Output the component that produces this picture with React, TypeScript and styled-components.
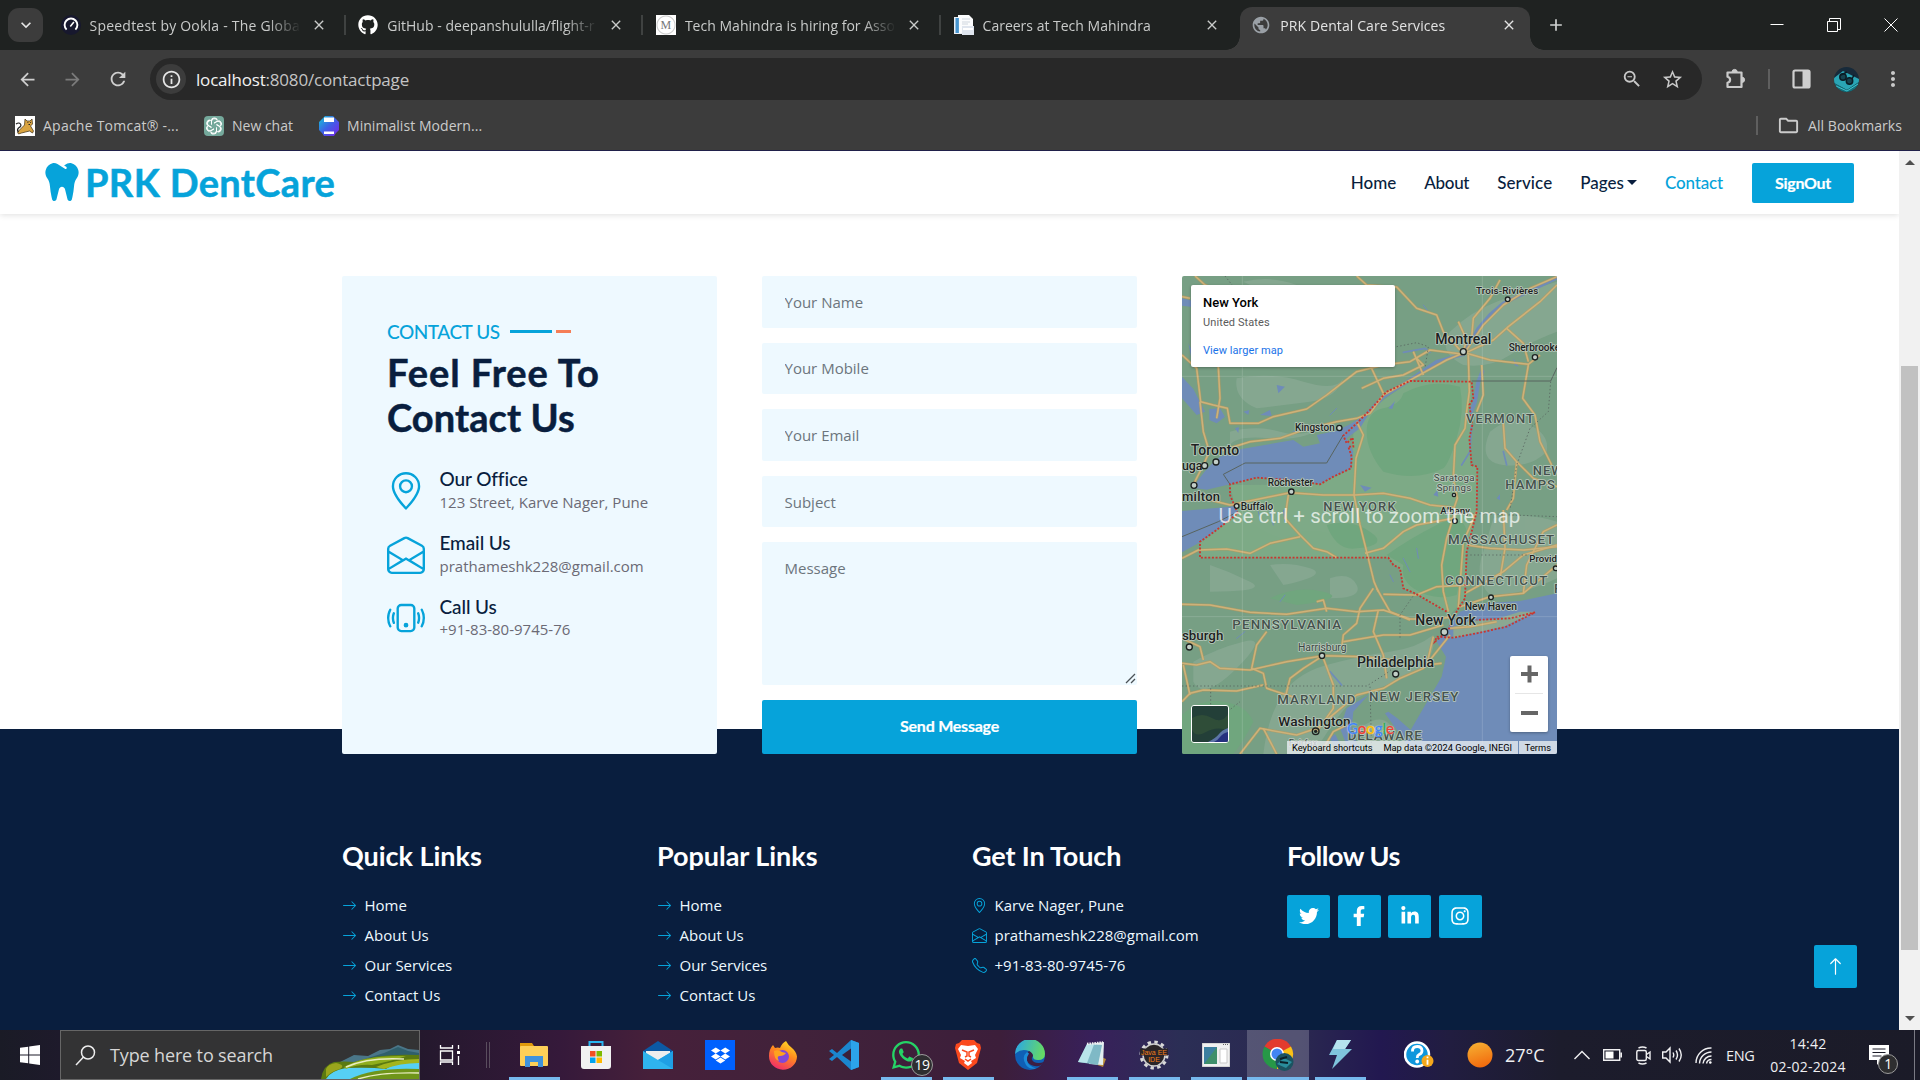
import React from "react";
import styled, { createGlobalStyle, css } from "styled-components";
import {
  BsArrowRight,
  BsArrowUp,
  BsEnvelopeOpen,
  BsGeoAlt,
  BsPhoneVibrate,
  BsTelephone,
} from "react-icons/bs";
import {
  FaDropbox,
  FaFacebookF,
  FaGithub,
  FaInstagram,
  FaLinkedinIn,
  FaTooth,
  FaTwitter,
  FaWhatsapp,
} from "react-icons/fa";
import {
  MdArrowBack,
  MdArrowForward,
  MdClose,
  MdOutlineFolder,
  MdOutlineInfo,
  MdPublic,
  MdRefresh,
  MdStarBorder,
  MdZoomOut,
  MdMoreVert,
  MdKeyboardArrowDown,
  MdAdd,
} from "react-icons/md";

const display = `Lato, "Open Sans", sans-serif`;
const body = `"Open Sans", "Noto Sans", sans-serif`;
const primary = "#06a3da";
const dark = "#091e3e";
const light = "#eef9ff";

const GlobalStyle = createGlobalStyle`
  * { box-sizing: border-box; }
  html, body { margin: 0; padding: 0; }
  body { font-family: ${body}; overflow: hidden; background: #fff; }
  svg { display: block; flex: none; }
`;

const Screen = styled.div`
  width: 1920px;
  height: 1080px;
  display: flex;
  flex-direction: column;
  overflow: hidden;
`;

/* ---------- browser chrome ---------- */

const TabStrip = styled.div`
  height: 50px;
  background: #1f2221;
  display: flex;
  color: #c9cbca;
`;

const TabSearch = styled.div`
  width: 35px;
  height: 34px;
  margin: 8px 3px 0 8px;
  border-radius: 11px;
  background: #3c3c3c;
  display: grid;
  place-items: center;
  color: #e6e6e6;
`;

const Tab = styled.div<{ $active?: boolean; $line?: boolean }>`
  position: relative;
  width: 290px;
  margin: 7px 4.2px 0 3.5px;
  height: 43px;
  padding: 0 9px 7px 11px;
  display: flex;
  align-items: center;
  gap: 9px;
  font-size: 14px;
  border-radius: 12px 12px 0 0;
  ${(p) =>
    p.$line &&
    css`
      &::after {
        content: "";
        position: absolute;
        right: -6px;
        top: 8px;
        width: 2px;
        height: 20px;
        background: #3f4241;
      }
    `}
  ${(p) =>
    p.$active &&
    css`
      background: #3c3c3c;
      color: #e3e3e3;
      &::before,
      &::after {
        content: "";
        position: absolute;
        bottom: 0;
        width: 14px;
        height: 14px;
      }
      &::before {
        left: -14px;
        background: radial-gradient(circle at 0 0, transparent 13.5px, #3c3c3c 14px);
      }
      &::after {
        right: -14px;
        background: radial-gradient(circle at 100% 0, transparent 13.5px, #3c3c3c 14px);
      }
    `}
`;

const TabTitle = styled.span<{ $spread?: number }>`
  width: 211px;
  padding-top: 1px;
  overflow: hidden;
  white-space: nowrap;
  line-height: 20px;
  letter-spacing: ${(p) => p.$spread ?? 0.05}px;
  mask-image: linear-gradient(90deg, #000 178px, transparent 211px);
`;

const TabClose = styled.span`
  width: 18px;
  display: grid;
  place-items: center;
`;

const MediumMark = styled.span`
  width: 20px;
  height: 20px;
  flex: none;
  background: radial-gradient(circle, #fff 8px, #c9c9c9 9px, #fff 10px);
  color: #777;
  font: 12px/20px "Liberation Serif", serif;
  text-align: center;
`;

const NewTab = styled.div`
  width: 40px;
  height: 50px;
  margin-left: 2px;
  display: grid;
  place-items: center;
  color: #d0d2d1;
`;

const WindowButtons = styled.div`
  margin-left: auto;
  padding-right: 1px;
  display: flex;
  height: 50px;
  color: #fff;
`;

const WindowButton = styled.div`
  width: 57px;
  display: grid;
  place-items: center;
`;

const Toolbar = styled.div`
  height: 58px;
  background: #3c3c3c;
  display: flex;
  align-items: center;
  padding: 0 15px 0 17px;
  color: #c9c9c9;
`;

const NavIcon = styled.span<{ $dim?: boolean; $gap?: number }>`
  width: 22px;
  margin-right: ${(p) => p.$gap ?? 22}px;
  color: ${(p) => (p.$dim ? "#7b7b7b" : "#cfcfcf")};
`;

const Omnibox = styled.div`
  width: 1552px;
  height: 42px;
  border-radius: 21px;
  background: #282828;
  display: flex;
  align-items: center;
  padding: 0 18px 0 6px;
  font-size: 17px;
  letter-spacing: -0.19px;
`;

const InfoBadge = styled.span`
  width: 30px;
  height: 30px;
  border-radius: 50%;
  background: #3c3c3c;
  display: grid;
  place-items: center;
  color: #e6e6e6;
  margin-right: 10px;
`;

const Url = styled.span`
  flex: 1;
  color: #c4c4c4;
  b {
    font-weight: 400;
    color: #f2f2f2;
  }
`;

const OmniIcon = styled.span`
  margin-left: 18px;
`;

const ToolActions = styled.div`
  margin-left: auto;
  display: flex;
  align-items: center;
`;

const Divider = styled.span<{ $h: number; $m: string }>`
  width: 2px;
  height: ${(p) => p.$h}px;
  margin: ${(p) => p.$m};
  background: #5f5f5f;
`;

const Bookmarks = styled.div`
  height: 43px;
  background: #3c3c3c;
  border-bottom: 1px solid #20204a;
  display: flex;
  align-items: center;
  padding: 0 18px 7px 15px;
  color: #cbcbcb;
  font-size: 14px;
`;

const Bookmark = styled.span<{ $w?: number; $spread?: number }>`
  display: flex;
  align-items: center;
  gap: 8px;
  width: ${(p) => (p.$w ? `${p.$w}px` : "auto")};
  white-space: nowrap;
  letter-spacing: ${(p) => p.$spread ?? 0}px;
`;

const Spacer = styled.span`
  flex: 1;
`;

/* ---------- page ---------- */

const Viewport = styled.div`
  height: 879px;
  display: flex;
`;

const Page = styled.main`
  position: relative;
  width: 1899px;
  height: 879px;
  overflow: hidden;
  background: #fff;
  display: flex;
  flex-direction: column;
`;

const Navbar = styled.nav`
  height: 63px;
  flex: none;
  background: #fff;
  box-shadow: 0 1px 6px rgba(0, 0, 0, 0.13);
  display: flex;
  align-items: center;
  padding: 1px 45px 0 43px;
`;

const Brand = styled.div`
  display: flex;
  align-items: center;
  gap: 4px;
  padding-bottom: 3px;
  color: ${primary};
  font: 700 38px/46px ${display};
  letter-spacing: 0.35px;
  -webkit-text-stroke: 0.5px;
`;

const NavLinks = styled.div`
  margin-left: auto;
  display: flex;
  align-items: center;
  gap: 28px;
  padding-bottom: 1px;
`;

const NavLink = styled.a<{ $active?: boolean; $spread?: number }>`
  display: flex;
  align-items: center;
  gap: 3px;
  color: ${(p) => (p.$active ? primary : dark)};
  font: 500 17px/24px ${display};
  letter-spacing: ${(p) => p.$spread ?? 0}px;
`;

const Caret = styled.span`
  border: 5px solid transparent;
  border-top-color: ${dark};
  border-bottom: 0;
  margin-bottom: 1px;
`;

const SignOut = styled.button`
  width: 102px;
  height: 40px;
  margin-left: 29px;
  padding: 0;
  border: 0;
  border-radius: 2px;
  background: ${primary};
  color: #fff;
  font: 700 16px/24px ${display};
  letter-spacing: -0.28px;
  -webkit-text-stroke: 0.2px;
`;

const ContactGrid = styled.section`
  position: relative;
  z-index: 1;
  flex: none;
  height: 478px;
  margin: 62px 0 0 342px;
  display: grid;
  grid-template-columns: repeat(3, 375px);
  gap: 45px;
`;

const ContactCard = styled.div`
  background: ${light};
  border-radius: 2px;
  padding: 45px;
`;

const Eyebrow = styled.h5`
  margin: 0 0 8px;
  display: flex;
  align-items: center;
  color: ${primary};
  font: 500 19px/21px ${display};
  letter-spacing: -0.46px;
`;

const Rule = styled.span<{ $w: number; $c: string; $gap: number }>`
  width: ${(p) => p.$w}px;
  height: 3px;
  margin-left: ${(p) => p.$gap}px;
  background: ${(p) => p.$c};
`;

const CardTitle = styled.h1`
  margin: 0 0 28px;
  color: ${dark};
  font: 700 38px/45px ${display};
  letter-spacing: 0.95px;
  -webkit-text-stroke: 0.5px;
`;

const TightLine = styled.span`
  letter-spacing: 0.08px;
`;

const ContactItem = styled.div`
  display: flex;
  align-items: center;
  gap: 14.5px;
  margin-bottom: 17.6px;
  color: ${primary};
`;

const ItemTitle = styled.h5`
  margin: -0.6px 0 0.6px;
  color: ${dark};
  font: 500 19px/23px ${display};
  letter-spacing: -0.1px;
`;

const ItemText = styled.div`
  color: #6b6a75;
  font-size: 15px;
  line-height: 23px;
`;

const Form = styled.form`
  display: flex;
  flex-direction: column;
  gap: 15px;
`;

const field = css`
  display: block;
  width: 375px;
  border: 0;
  border-radius: 2px;
  outline: 0;
  background: ${light};
  color: #6b6a75;
  font: 400 15px/22.5px ${body};
  &::placeholder {
    color: #6c757d;
    opacity: 1;
  }
`;

const Input = styled.input`
  ${field}
  height: 51.6px;
  padding: 6px 22.5px;
`;

const MessageField = styled.div`
  position: relative;
  height: 142.6px;
`;

const TextArea = styled.textarea`
  ${field}
  height: 142.6px;
  padding: 15px 22.5px;
  resize: none;
`;

const Grabber = styled.svg`
  position: absolute;
  right: 1px;
  bottom: 1px;
`;

const Submit = styled.button`
  height: 54px;
  padding: 0 0 1px;
  border: 0;
  border-radius: 2px;
  background: ${primary};
  color: #fff;
  font: 700 16px/24px ${display};
  letter-spacing: -0.23px;
  -webkit-text-stroke: 0.2px;
`;

/* ---------- map ---------- */

const MapFrame = styled.div`
  position: relative;
  width: 375px;
  height: 478px;
  overflow: hidden;
  border-radius: 2px;
  font-family: Roboto, sans-serif;
`;

const MapInfo = styled.div`
  position: absolute;
  left: 9px;
  top: 9px;
  width: 204px;
  height: 82px;
  padding: 8px 12px;
  border-radius: 2px;
  background: #fff;
  box-shadow: 0 1px 3px rgba(0, 0, 0, 0.3);
`;

const MapPlace = styled.div`
  color: #000;
  font-size: 13px;
  font-weight: 500;
  line-height: 19px;
`;

const MapRegion = styled.div`
  margin-top: 1px;
  color: #5b5b5b;
  font-size: 11px;
  line-height: 20px;
  letter-spacing: 0.1px;
`;

const MapLink = styled.a`
  display: block;
  margin-top: 8px;
  color: #1a73e8;
  font-size: 11px;
  line-height: 20px;
  letter-spacing: 0.06px;
`;

const ScrollHint = styled.div`
  position: absolute;
  left: 0;
  right: 0;
  top: 227px;
  text-align: center;
  color: rgba(255, 255, 255, 0.72);
  font-size: 20.5px;
  line-height: 26px;
  letter-spacing: 0.05px;
`;

const ZoomControl = styled.div`
  position: absolute;
  right: 9px;
  bottom: 22px;
  width: 38px;
  height: 76px;
  border-radius: 2px;
  background: #fff;
  box-shadow: 0 1px 3px rgba(0, 0, 0, 0.3);
`;

const Satellite = styled.div`
  position: absolute;
  left: 9px;
  bottom: 11px;
  width: 38px;
  height: 38px;
  border: 1.5px solid #fff;
  border-radius: 3px;
  overflow: hidden;
`;

const GoogleMark = styled.div`
  position: absolute;
  left: 165px;
  bottom: 16px;
  display: flex;
  font: 500 15px/20px Lato, sans-serif;
  letter-spacing: -0.1px;
  -webkit-text-stroke: 0.3px;
  text-shadow: 0 0 1.5px #fff;
`;

const Letter = styled.span<{ $c: string }>`
  color: ${(p) => p.$c};
`;

const Attribution = styled.div`
  position: absolute;
  right: 0;
  bottom: 0;
  width: 270px;
  height: 13px;
  display: flex;
  justify-content: space-between;
  padding: 0 6px 0 5px;
  background: rgba(235, 238, 242, 0.78);
  color: #000;
  font-size: 9.3px;
  line-height: 13px;
  white-space: nowrap;
`;

const MapData = styled.span`
  padding-left: 5px;
`;

const Terms = styled.span`
  padding-left: 6px;
  border-left: 1px solid #6e8cb9;
`;

/* ---------- footer ---------- */

const Footer = styled.footer`
  flex: 1;
  margin-top: -25px;
  padding: 110.5px 0 0 342px;
  background: ${dark};
  display: grid;
  grid-template-columns: repeat(4, 315px);
  align-content: start;
`;

const FooterTitle = styled.h3<{ $spread?: number }>`
  margin: 0 0 18.8px;
  color: #fff;
  font: 700 27px/32px ${display};
  letter-spacing: ${(p) => p.$spread ?? -0.04}px;
`;

const FooterRow = styled.div`
  display: flex;
  align-items: center;
  gap: 7.5px;
  height: 30px;
  color: ${light};
  font-size: 15px;
  svg {
    color: ${primary};
  }
`;

const Socials = styled.div`
  display: flex;
  gap: 7.6px;
  padding-top: 4.7px;
`;

const Square = styled.a`
  width: 43px;
  height: 43px;
  border-radius: 2px;
  background: ${primary};
  color: #fff;
  display: grid;
  place-items: center;
`;

const BackToTop = styled(Square)`
  position: absolute;
  right: 42px;
  bottom: 42px;
`;

const Scrollbar = styled.div`
  width: 21px;
  background: #f1f1f1;
  display: flex;
  flex-direction: column;
  align-items: center;
  padding: 9px 0;
`;

const ScrollArrow = styled.span<{ $down?: boolean }>`
  border: 5px solid transparent;
  ${(p) =>
    p.$down
      ? css`
          border-top-color: #505050;
          border-bottom: 0;
        `
      : css`
          border-bottom-color: #505050;
          border-top: 0;
        `}
`;

const Thumb = styled.span`
  width: 17px;
  height: 584px;
  margin: 201px 0 auto;
  background: #c1c1c1;
`;

/* ---------- taskbar ---------- */

const Taskbar = styled.div`
  height: 50px;
  display: flex;
  color: #f0f0f2;
  background: linear-gradient(
    90deg,
    #1a1b26 0,
    #1e1a2b 60px,
    #24182d 420px,
    #35193a 560px,
    #46203a 650px,
    #41223a 800px,
    #3c1e3a 1000px,
    #38205a 1092px,
    #2b2e55 1180px,
    #2a2850 1300px,
    #221850 1380px,
    #211d40 1450px,
    #1c1c2c 1560px,
    #1b1b28 1920px
  );
`;

const StartCell = styled.div`
  width: 60px;
  display: grid;
  place-items: center;
`;

const SearchBox = styled.div`
  width: 360px;
  height: 50px;
  border: 1px solid #666;
  background: #333334;
  display: flex;
  align-items: center;
  padding-left: 14px;
  color: #d6d6d6;
  font-size: 18px;
  letter-spacing: -0.14px;
`;

const SearchText = styled.span`
  margin-left: 14px;
  flex: 1;
`;

const TaskView = styled.div`
  width: 83px;
  display: flex;
  align-items: center;
  justify-content: space-between;
  padding: 0 13px 0 19px;
`;

const Grip = styled.span`
  width: 4px;
  height: 26px;
  border: 1px solid #5a4e5e;
  border-width: 0 1px;
`;

const AppCell = styled.div<{ $running?: boolean; $active?: boolean }>`
  position: relative;
  width: 62px;
  display: grid;
  place-items: center;
  background: ${(p) => (p.$active ? "rgba(255,255,255,.2)" : "transparent")};
  ${(p) =>
    (p.$running || p.$active) &&
    css`
      &::after {
        content: "";
        position: absolute;
        left: ${p.$active ? 0 : 6}px;
        right: ${p.$active ? 0 : 5}px;
        bottom: 0;
        height: 3px;
        background: #76b9ed;
      }
    `}
`;

const CountBadge = styled.span<{ $x: number; $y: number; $s: number }>`
  position: absolute;
  left: ${(p) => p.$x}px;
  top: ${(p) => p.$y}px;
  width: ${(p) => p.$s}px;
  height: ${(p) => p.$s}px;
  border: 1px solid #9b9b9b;
  border-radius: 50%;
  background: #2e2e30;
  color: #fff;
  font-size: 14px;
  line-height: ${(p) => p.$s - 2}px;
  text-align: center;
  letter-spacing: -0.5px;
`;

const Tray = styled.div`
  width: 549px;
  display: flex;
  align-items: center;
`;

const TrayItem = styled.span<{ $gap: number }>`
  position: relative;
  margin-left: ${(p) => p.$gap}px;
`;

const Temperature = styled(TrayItem)`
  font-size: 18px;
  width: 40px;
`;

const Language = styled(TrayItem)`
  font-size: 14.5px;
  letter-spacing: -0.3px;
  width: 28px;
`;

const Clock = styled(TrayItem)`
  width: 78px;
  font-size: 14px;
  line-height: 23px;
  text-align: center;
  letter-spacing: 0.25px;
  padding-bottom: 1px;
`;

const DesktopEdge = styled.span`
  height: 50px;
  margin-left: auto;
  margin-right: 5px;
  border-left: 1px solid #7a7a84;
`;

/* ---------- drawings ---------- */

const SpeedtestIcon = () => (
  <svg width="20" height="20" viewBox="0 0 20 20">
    <circle cx="10" cy="10" r="10" fill="#17182e" />
    <path d="M5.6 14.6a6.4 6.4 0 1 1 8.8 0" fill="none" stroke="#fff" strokeWidth="1.9" />
    <path d="M9.3 11.4l3.6-4.4" stroke="#fff" strokeWidth="1.6" />
  </svg>
);

const DocIcon = () => (
  <svg width="20" height="20" viewBox="0 0 20 20">
    <path d="M0 2h14v17H0z" fill="#e9eef4" />
    <path d="M4 0h11l4 4v14H4z" fill="#fbfcfd" />
    <path d="M1.5 3h3.4v15H1.5z" fill="#4795cf" />
    <path d="M8 4h8M8 7h8M8 9h6" stroke="#cfd6de" />
    <path d="M8 11h12v9H8z" fill="#dfe5ee" />
    <path d="M9 14h10" stroke="#fff" strokeWidth="2" />
  </svg>
);

const TomcatIcon = () => (
  <svg width="20" height="20" viewBox="0 0 20 20">
    <path d="M0 0h20v20H0z" fill="#fff" />
    <path d="M10 3l2 2h3l2-2 .5 5-2 2 3 5-1 2-3-2-4 1-4 1-3 1-1-2 3-3 4-4z" fill="#d9a441" stroke="#3a2b12" strokeWidth=".7" />
    <path d="M1 8q3-2 4.500 0t-2 4q-2 2 0 4" fill="none" stroke="#222" strokeWidth="1.200" />
    <path d="M12.500 6.500h.8M15 6.500h.8M13.500 8.500h1.500" stroke="#222" />
  </svg>
);

const ChatIcon = () => (
  <svg width="20" height="20" viewBox="0 0 20 20">
    <rect width="20" height="20" rx="4" fill="#75a99c" />
    <g fill="none" stroke="#fff" strokeWidth="1">
      {[0, 60, 120, 180, 240, 300].map((a) => (
        <path key={a} transform={`rotate(${a} 10 10)`} d="M7.500 8.500V5.500a2.900 2.900 0 0 1 5.500-1.200M10 7.100l3.500-2a2.900 2.900 0 0 1 3 4.900" />
      ))}
    </g>
  </svg>
);

const MinimalIcon = () => (
  <svg width="20" height="20" viewBox="0 0 20 20">
    <defs>
      <linearGradient id="mini" x1="0" y1="0" x2="1" y2="1">
        <stop offset="0" stopColor="#12c5d8" />
        <stop offset=".5" stopColor="#3f5fe6" />
        <stop offset="1" stopColor="#7a22e8" />
      </linearGradient>
    </defs>
    <path d="M6 0h8l3 3 3 3v8l-3 3-2 3H5l-2-3-3-3V6l3-3z" fill="url(#mini)" />
    <path d="M5 1.500h10v4.500H5zM5 15.500h10V18H5z" fill="#fff" />
  </svg>
);

const PuzzleIcon = () => (
  <svg width="22" height="22" viewBox="0 0 22 22">
    <path
      d="M2.500 4.500h14v14.500h-14v-4.200q2.600-.6 2.600-3t-2.600-3z"
      fill="none"
      stroke="#cbcbcb"
      strokeWidth="2.200"
      strokeLinejoin="round"
    />
    <path d="M7 4a2.600 2.600 0 0 1 5.200 0zM17 9.200a2.600 2.600 0 0 1 0 5.200z" fill="#cbcbcb" stroke="#cbcbcb" />
  </svg>
);

const AvatarIcon = () => (
  <svg width="25" height="25" viewBox="0 0 25 25">
    <defs>
      <clipPath id="avatar">
        <circle cx="12.500" cy="12.500" r="12.500" />
      </clipPath>
    </defs>
    <g clipPath="url(#avatar)">
      <path d="M0 0h25v25H0z" fill="#172a3a" />
      <path d="M0 11L9 4l16 8v3l-12 8L0 16z" fill="#2aa5b5" />
      <path d="M0 16l13 7 12-8v10H0z" fill="#14707b" />
      <path d="M2 19l11 5 11-7" fill="none" stroke="#3fc3cf" />
      <circle cx="9" cy="10" r="3.200" fill="#164450" stroke="#0b1d26" strokeWidth="1.500" />
      <circle cx="15.500" cy="14" r="3.200" fill="#164450" stroke="#0b1d26" strokeWidth="1.500" />
      <path d="M7 8l6-3M18 12l2-4" stroke="#0b1d26" strokeWidth="1.500" />
    </g>
  </svg>
);

const SidePanelIcon = () => (
  <svg width="20" height="20" viewBox="0 0 20 20">
    <rect x="1.500" y="1.500" width="16" height="17" rx="1.500" fill="none" stroke="#cfcfcf" strokeWidth="2.200" />
    <path d="M10.500 1.500h7v17h-7z" fill="#cfcfcf" />
  </svg>
);

const roads = [
  "M36 270L80 310 92 410 130 420 172 430 180 475 265 475 310 455 410 432 470 390 560 320 640 300 720 290 780 255 880 268",
  "M75 33L105 60 130 70M36 95L60 100M560 33L590 60 680 66 740 130 800 150 820 200 870 255",
  "M90 410L100 500 118 560 100 600 72 655",
  "M118 550L160 555 240 530 330 520 400 495 500 470 560 460 600 445 640 390 730 340 830 285 885 262",
  "M575 370L640 340 700 330 760 300 740 280M600 300L640 385M730 260L760 330",
  "M885 262L940 180 1000 120 1080 70 1161 35M890 262L970 225 1015 185 1110 110 1161 60",
  "M990 45L960 100 910 160 905 220M865 170L890 225 880 260M1010 190L1060 235 1075 290",
  "M890 265L960 285 1075 298 1110 270M895 270L898 380 890 440 885 490 855 540 850 640 862 700 850 735",
  "M1075 300L1058 400 1095 450 1110 530 1145 600M935 300L940 390 920 440M1000 475L1005 550 1040 590 1030 700 1010 735M1040 590L1090 640 1161 665",
  "M100 700L180 720 300 695 360 683 460 690 555 690 640 685 720 700 780 720 855 728",
  "M560 470L580 510 558 580 552 690 570 780 590 860 612 950 625 980",
  "M355 690L345 760 390 810 430 850 470 860 500 878M36 880L85 855 170 852 240 865 300 835 390 815",
  "M585 865L640 850 700 800 740 780 850 760M140 460L150 400 145 306",
  "M855 740L830 820 815 900 820 980 835 1040M920 740L880 830 870 960 865 1030",
  "M36 1018L120 1020 240 1042 350 1048 470 1030 560 1040 640 1035 720 1062 800 1062 850 1055",
  "M440 1010L460 1005 470 1040M610 970L570 1030 560 1075 520 1110 515 1150",
  "M620 970L660 1040 720 1065M640 988L740 990 800 965 900 960M625 1035L610 1100 640 1170 650 1240",
  "M36 1195L80 1200 120 1190 150 1210 240 1215 350 1190 460 1172 580 1175 670 1185",
  "M290 1100L260 1140 245 1210 280 1225 290 1270 380 1300",
  "M36 1120L90 1145 100 1185M36 1310L60 1285 100 1275 200 1278 280 1260",
  "M455 1175L400 1210 360 1240 345 1300M460 1180L490 1260 490 1330 440 1400",
  "M840 1110L760 1210 690 1240 640 1270 560 1290 500 1340 440 1390 380 1410 270 1390 210 1467",
  "M520 1130L640 1110 720 1110 820 1080M790 1115L770 1200 815 1195",
  "M840 1090L900 1085 980 1070M870 1025L960 995 1060 985 1161 900M885 985L930 960 1000 920 1060 870 1161 840",
  "M890 840L960 850 1060 855 1161 845M1000 735L1005 850 990 940M1060 985L1070 900 1120 800 1161 780",
  "M280 1390L320 1467M530 1380L490 1400 450 1467M60 1290L40 1200",
];

/* lighter, less wooded land */
const patches = [
  "M220 50Q300 30 380 60T560 90Q480 140 380 110T220 50z",
  "M200 340Q300 320 400 350T520 340Q500 400 420 410T260 430Q190 400 200 340z",
  "M840 200Q900 140 980 110T1161 50V200Q1080 230 1020 270T880 300Q800 260 840 200z",
  "M180 500Q260 480 330 500T470 480Q400 530 300 520T180 540z",
  "M210 710Q350 680 480 705T640 780Q600 840 500 810T340 820Q230 790 210 710z",
  "M120 900Q180 920 240 950T120 980zM300 900Q360 890 420 910T340 960zM480 940Q540 920 560 960T480 1000z",
  "M320 1320Q360 1230 470 1200T660 1160 790 1110Q800 1200 700 1240T560 1300 430 1467H280Q290 1380 320 1320z",
  "M970 760Q1060 740 1161 770V940Q1060 990 960 990 910 940 940 860z",
  "M960 500Q1020 450 1080 480T1130 560Q1080 610 1000 600T960 500z",
  "M70 1190Q140 1150 220 1130T200 1210 70 1250z",
  "M570 1390Q620 1350 650 1370T700 1467H600z",
];

const forests = [
  "M700 385Q780 340 870 365 885 440 860 520T820 610Q740 650 640 620 590 560 590 500T640 430 700 385z",
  "M650 870Q720 820 800 780T890 800Q880 900 860 990 790 1010 730 970 690 940 700 900z",
  "M36 1467V1350Q90 1300 160 1310T250 1370Q220 1430 190 1467z",
  "M470 780Q540 760 600 800T560 850Q500 860 470 780z",
  "M300 1000Q380 960 460 980T380 1020z",
];

type LabelSpec = [string, number, number, number, number, number];
/* text, x, baseline, size, weight, letter spacing */
const cities: LabelSpec[] = [
  ["Trois-Rivières", 918, 87, 29.5, 500, 0.4],
  ["Montreal", 796, 238, 42, 500, 0],
  ["Sherbrooke", 1016, 259, 30, 500, 0],
  ["Kingston", 375, 499, 30, 500, 0],
  ["Toronto", 62, 571, 42, 500, 0],
  ["uga", 36, 615, 37, 500, 0],
  ["milton", 36, 708, 39, 500, 0.8],
  ["Rochester", 293, 662, 30, 500, 0],
  ["Buffalo", 212, 735, 30, 500, 0],
  ["Saratoga", 791, 648, 29, 400, 1],
  ["Springs", 800, 678, 29, 400, 1],
  ["Albany", 811, 748, 29, 500, 0],
  ["Provid", 1078, 892, 29, 500, 0],
  ["New Haven", 884, 1035, 31, 500, 0],
  ["New York", 736, 1079, 42, 500, 0.4],
  ["sburgh", 36, 1124, 40, 500, 0],
  ["Harrisburg", 384, 1157, 31, 400, 0],
  ["Philadelphia", 561, 1207, 42, 500, 0],
  ["Washington", 325, 1382, 41, 500, 0],
  ["Fairfax", 356, 1443, 28, 400, 0],
];
const states: LabelSpec[] = [
  ["VERMONT", 888, 475, 39, 500, 3.4],
  ["NEW", 1088, 631, 39, 500, 3],
  ["HAMPS", 1006, 671, 39, 500, 3],
  ["NEW YORK", 460, 739, 39, 500, 3.4],
  ["MASSACHUSET", 834, 838, 40, 500, 3],
  ["CONNECTICUT", 825, 961, 40, 500, 3.6],
  ["R", 1152, 985, 40, 500, 3],
  ["PENNSYLVANIA", 187, 1091, 40, 500, 3.4],
  ["MARYLAND", 322, 1316, 40, 500, 3],
  ["NEW JERSEY", 597, 1308, 40, 500, 3.4],
  ["DELAWARE", 533, 1426, 40, 500, 2.5],
];
const dots: [number, number, number][] = [
  [1013, 103, 7], [880, 260, 9], [1095, 277, 8], [508, 489, 8], [138, 591, 9], [104, 602, 9],
  [72, 661, 9], [364, 680, 8], [200, 723, 7], [852, 690, 5], [855, 768, 7], [1157, 910, 7],
  [963, 997, 7], [823, 1101, 10], [58, 1146, 9], [456, 1172, 8], [677, 1227, 9],
];

const MapDrawing = () => (
  <svg width="375" height="478" viewBox="36 33 1125 1434" preserveAspectRatio="none">
    <path d="M36 33h1125v1434H36z" fill="#779f84" />
    <g fill="#89a994" opacity=".8">
      {patches.map((d) => (
        <path key={d} d={d} />
      ))}
    </g>
    <path
      d="M720 348L905 350 900 600 922 605 920 740 890 860 885 1000 840 1050 735 985 700 970 690 915 655 878 90 878 90 830 200 745 180 660 450 658 545 610 550 500 600 435z"
      fill="#7dab86"
      opacity=".9"
    />
    <g fill="#70a67e">
      {forests.map((d) => (
        <path key={d} d={d} />
      ))}
    </g>
    <g fill="#6f8cb8">
      <path d="M70 668Q100 615 150 575L215 552 330 532 370 525 400 545 450 535 440 510 500 497 540 478 600 440 570 490 530 520 550 560 543 610 490 635 450 656 360 645 260 638 180 658 110 674z" />
      <path d="M36 738L195 724 205 742 140 795 90 832 36 862z" />
      <path d="M36 335L70 372 105 440 80 450 36 400zM118 432L150 430 165 455 140 475 118 465zM36 100l35 8-5 18-30-4z" />
      <path d="M270 450l30-15 5 18zM220 440l18-5-3 14zM320 360l25 5-20 20zM55 235l30 60-20-10zM570 660l35 8-20 12zM790 690l12-15 3 20zM655 430l20-22-8 24zM980 700l10-12v18zM1030 280l16 25-12-4zM365 500l30-12 4 12zM195 490l12-4-2 18z" />
      <path d="M1161 985L1050 1008 940 1015 870 1040 840 1080 800 1130 828 1175 815 1235 760 1330 722 1395 682 1360 655 1340 645 1345 705 1430 720 1467 1161 1467z" />
      <path d="M595 1290L530 1330 510 1390 540 1467 572 1467 545 1390 550 1340zM480 1420l25 47h20l-30-60z" />
    </g>
    <g fill="none" stroke="#6f8cb8" strokeLinecap="round" strokeLinejoin="round">
      <path strokeWidth="11" d="M570 470L640 395 720 345 800 290 880 268 925 190 960 150 1000 115 1161 38" />
      <path strokeWidth="12" d="M937 320L925 350 915 410 903 440" />
      <path strokeWidth="5" d="M875 600L900 560 905 480M780 262L765 250 700 262M480 1220L515 1260M1000 560L1010 600" />
      <path
        strokeWidth="3"
        d="M300 740L310 780M340 735L345 770M265 740L270 765M480 450L500 430M760 120L775 140M640 180L650 175M700 880L720 920M740 850L745 880M660 930L670 950M200 1120L225 1100M330 1010L345 990"
      />
    </g>
    <path d="M850 1085L900 1068 980 1062 1050 1040 1095 1040 1000 1085 900 1107 850 1120z" fill="#8ba892" />
    <g fill="none" strokeLinejoin="round">
      {roads.map((d) => (
        <path key={d} d={d} stroke="#b99a5c" strokeWidth="8" opacity=".75" />
      ))}
      {roads.map((d) => (
        <path key={`${d}c`} d={d} stroke="#cdb27a" strokeWidth="4.500" />
      ))}
    </g>
    <g fill="none" stroke="#58645f" strokeWidth="3">
      <path d="M905 348H1142L1161 308M520 510L470 594H225L160 628 180 658M36 815L145 770 200 742" />
      <path
        strokeDasharray="4 7"
        strokeWidth="2.500"
        d="M165 33L210 90M680 245L740 233 775 245 765 310M1142 350L1135 440 1080 490 1040 600 1020 735M890 870H1100M895 745L1161 755M36 1263H590L650 1225 680 1200M735 985L690 1050 690 1120M600 1265L605 1467M122 1270V1380L210 1310"
      />
    </g>
    <path
      d="M830 1040L735 985 700 970 690 910 670 900 655 878H90V830L140 795 203 745 180 690V658L260 638 360 645 450 658 490 635 543 610 545 575 535 545 550 545 548 518 530 535 520 512 560 475 600 435 650 380 720 348 905 350 910 400 898 420 907 480 898 520 905 600 922 605 920 740 890 860 885 1000 862 1035 835 1095 795 1130 800 1115 850 1118 930 1103 1010 1085 1095 1042 1020 1060 920 1065"
      fill="none"
      stroke="#c9362f"
      strokeWidth="5.500"
      strokeDasharray="6 5"
    />
    <path d="M217 33V1467M937 33V1467M36 334H1161M36 1055H1161" stroke="#fff" opacity=".14" strokeWidth="3" />
    <g fontFamily="Roboto, sans-serif" stroke="#b9cabd" strokeWidth="5" strokeLinejoin="round" paintOrder="stroke">
      {states.map(([t, x, y, s, w, l]) => (
        <text key={t} x={x} y={y} fontSize={s} fontWeight={w} letterSpacing={l} fill="#45524c">
          {t}
        </text>
      ))}
      {cities.map(([t, x, y, s, w, l]) => (
        <text key={t} x={x} y={y} fontSize={s} fontWeight={w} letterSpacing={l} fill={w === 400 ? "#3c4642" : "#1d2221"}>
          {t}
        </text>
      ))}
    </g>
    {dots.map(([x, y, r]) => (
      <circle key={`${x}-${y}`} cx={x} cy={y} r={r} fill="#c3cfc8" stroke="#1d2221" strokeWidth="4" />
    ))}
    <circle cx="437" cy="1399" r="10" fill="none" stroke="#1d2221" strokeWidth="4" />
    <circle cx="437" cy="1399" r="5" fill="#1d2221" />
  </svg>
);

const SatelliteView = () => (
  <svg width="36" height="36" viewBox="0 0 36 36">
    <path d="M0 0h36v36H0z" fill="#233f38" />
    <path d="M0 12Q10 6 20 12T36 8V24Q24 20 14 26T0 24z" fill="#2f4d38" />
    <path d="M36 22Q30 24 27 28T16 36H36z" fill="#5c74a6" />
    <path d="M36 26Q31 27 28 31T22 36H36z" fill="#25307e" />
  </svg>
);

const ZoomGlyphs = () => (
  <svg width="38" height="76" viewBox="0 0 38 76">
    <path d="M11 18h17M19.500 9.500v17M11 57h17" stroke="#666" strokeWidth="4" />
    <path d="M5 37.500h28" stroke="#e6e6e6" />
  </svg>
);

const WindowsLogo = () => (
  <svg width="20" height="20" viewBox="0 0 20 20" fill="#fff">
    <path d="M0 2.800L8.200 1.700V9.500H0zM9.200 1.500L20 0v9.500H9.200zM0 10.500h8.200v7.800L0 17.200zM9.200 10.500H20V20L9.200 18.500z" />
  </svg>
);

const SearchGlyph = () => (
  <svg width="21" height="21" viewBox="0 0 21 21" fill="none" stroke="#eee" strokeWidth="1.500">
    <circle cx="13" cy="7.500" r="6.500" />
    <path d="M8.500 12L1 20" />
  </svg>
);

const Landscape = () => (
  <svg width="99" height="48" viewBox="0 0 99 48">
    <path d="M20 31L34 24 48 25 60 19 70 18 78 14 88 18 99 19V48H20z" fill="#4a7688" />
    <path d="M48 27l16-5 14-6 10 4 11 2v10H48z" fill="#2f5f6c" />
    <path d="M1 48Q3 34 14 31 24 30 34 31 60 22 99 24V48z" fill="#5b7a10" />
    <path d="M6 48Q10 40 26 37 50 36 66 38 74 32 99 29V38Q70 40 50 44L34 48z" fill="#56d0f4" />
    <path d="M6 38Q8 33 16 32 26 34 20 38 12 40 6 46z" fill="#9aa61c" />
    <path d="M24 36Q44 24 86 25 72 30 52 34 38 33 26 38z" fill="#8fae1d" />
    <path d="M56 36Q76 28 99 28V32Q80 32 64 38z" fill="#a3b51c" />
    <path d="M30 48Q54 36 99 38V48z" fill="#6f951a" />
    <path d="M26 36Q48 26 84 28M38 48Q60 41 99 42" fill="none" stroke="#e9edc0" strokeWidth="1.500" />
  </svg>
);

const TaskViewGlyph = () => (
  <svg width="22" height="20" viewBox="0 0 22 20" fill="none" stroke="#fff" strokeWidth="1.300">
    <path d="M1.500 6h12v9h-12zM1.500 0v3h12V0M1.500 20v-3h12V20M19.500 0v4M19.500 11v9" />
    <path d="M18 6h3v3h-3z" fill="#fff" stroke="none" />
  </svg>
);

const ExplorerIcon = () => (
  <svg width="28" height="24" viewBox="0 0 28 24">
    <path d="M0 0h12l2 3v6H0z" fill="#e09a0b" />
    <rect y="3" width="28" height="20" rx="1" fill="#fdcf58" />
    <path d="M5 13h18v11h-5v-5h-8v5H5z" fill="#3f92dc" />
  </svg>
);

const StoreIcon = () => (
  <svg width="30" height="30" viewBox="0 0 30 30">
    <path d="M8.500 8V2h13v6" fill="none" stroke="#29b5f0" strokeWidth="2" />
    <path d="M0 6h30v20q0 3-3 3H3q-3 0-3-3z" fill="#f1f1f1" />
    <path d="M9 11h5.500v5.500H9z" fill="#f25022" />
    <path d="M15.500 11H21v5.500h-5.500z" fill="#7fba00" />
    <path d="M9 17.500h5.500V23H9z" fill="#00a4ef" />
    <path d="M15.500 17.500H21V23h-5.500z" fill="#ffb900" />
  </svg>
);

const MailIcon = () => (
  <svg width="30" height="28" viewBox="0 0 30 28">
    <path d="M0 10L15 0l15 10v4H0z" fill="#0c59a4" />
    <path d="M3 10h24v10H3z" fill="#eee" />
    <path d="M0 10l15 9 15-9v18H0z" fill="#2fb4ee" />
    <path d="M15 19l15-9v18z" fill="#1f9fe4" />
  </svg>
);

const DropboxTile = styled.span`
  width: 30px;
  height: 30px;
  display: grid;
  place-items: center;
  background: #0061fe;
  color: #fff;
`;

const FirefoxIcon = () => (
  <svg width="29" height="29" viewBox="0 0 29 29">
    <defs>
      <linearGradient id="fox" x1=".8" y1="0" x2=".3" y2="1">
        <stop offset="0" stopColor="#ffe226" />
        <stop offset=".45" stopColor="#ff8a1f" />
        <stop offset="1" stopColor="#ef2a6c" />
      </linearGradient>
    </defs>
    <path d="M18 0q2 4 6 7t5 8.500A14 13.500 0 0 1 1 15Q1 8 5 4l2 3q3-1 5 0 2-5 6-7z" fill="url(#fox)" />
    <circle cx="14.500" cy="15.500" r="6.500" fill="#8047d8" />
    <path d="M6 10q4-2 8 1l4 1q-2 3-6 3t-1 5q-5-1-5-10z" fill="#ffa21f" />
  </svg>
);

const CodeIcon = () => (
  <svg width="30" height="30" viewBox="0 0 30 30">
    <path d="M22 0l8 3v24l-8 3L8 17l-5 4-3-2 5-4-5-4 3-2 5 4z" fill="#1b86cf" />
    <path d="M22 8.500v13L13 15z" fill="#3a2039" />
    <path d="M22 0l8 3v24l-8 3z" fill="#2ca3ea" />
  </svg>
);

const BraveIcon = () => (
  <svg width="26" height="30" viewBox="0 0 26 30">
    <path d="M7 0h12l3 3 3 1 1 4-4 15-9 7-9-7L0 8l1-4 3-1z" fill="#fb4a1e" />
    <path d="M6 5l7 1 7-1 3 4-3 6 1 3-5 3 1 2-4 3-4-3 1-2-5-3 1-3-3-6z" fill="#fff" />
    <path d="M7 10l5 2v4l-2 1M19 10l-5 2v4l2 1M10 19l3 2 3-2" fill="none" stroke="#fb4a1e" strokeWidth="1.500" />
  </svg>
);

const EdgeIcon = () => (
  <svg width="30" height="30" viewBox="0 0 30 30">
    <defs>
      <linearGradient id="edge" x1="0" y1=".2" x2="1" y2=".4">
        <stop offset="0" stopColor="#2aa6e8" />
        <stop offset="1" stopColor="#66da63" />
      </linearGradient>
    </defs>
    <circle cx="15" cy="15" r="15" fill="#0f5fb5" />
    <path d="M0 14A15 15 0 0 1 30 14q0 6-7 6-5 0-5-3t-4-6Q6 8 0 14z" fill="url(#edge)" />
    <path d="M14 11q-5 4-2 10t12 5q3-1 5-4-6 2-10 0-4-3-1-6 0-3-4-5z" fill="#3c1e44" />
    <path d="M12 12q-6 5-1 13 4 5 10 3.500-8-2.500-9-8-.5-4 2-7z" fill="#1b8ad8" />
  </svg>
);

const NotepadIcon = () => (
  <svg width="28" height="28" viewBox="0 0 28 28">
    <path d="M14 22l11 4 3-8-5-2z" fill="#b98b3a" />
    <path d="M10 3l16-2-1 23-14-1z" fill="#e2eef0" />
    <path d="M9 3l15 1-4 20-20-3z" fill="#7fb9c6" />
    <path d="M9 3l7 .5L9 22l-9-1z" fill="#b9e4ea" />
    <path d="M9 3l16-1.500" stroke="#efefef" strokeWidth="2.500" strokeDasharray="1.500 1" />
  </svg>
);

const GearIcon = () => (
  <svg width="30" height="30" viewBox="0 0 30 30">
    <circle cx="15" cy="15" r="13" fill="none" stroke="#d9d9d9" strokeWidth="3" strokeDasharray="3.400 3.400" />
    <circle cx="15" cy="15" r="11" fill="#2a2528" stroke="#cfcfcf" strokeWidth="1.500" />
    <path d="M1 8.500h28v7H1z" fill="#2a2528" />
    <g fill="#f07e1a" fontFamily="Liberation Sans, sans-serif" fontSize="7" textAnchor="middle">
      <text x="15" y="14.500">Java EE</text>
      <text x="15" y="21.500">IDE</text>
    </g>
  </svg>
);

const WindowIcon = () => (
  <svg width="28" height="24" viewBox="0 0 28 24">
    <path d="M0 0h28v24H0z" fill="#f0f0f0" stroke="#bbb" />
    <path d="M2 4h13v17H2z" fill="#3f8f6a" />
    <path d="M2 4h13L2 21z" fill="#3c7fa0" />
    <path d="M18 6h7v14h-7z" fill="#fff" stroke="#c9c9c9" />
    <path d="M21 1.500h6" stroke="#666" strokeDasharray="1 1" />
  </svg>
);

const ChromeIcon = () => (
  <svg width="32" height="32" viewBox="0 0 32 32">
    <path d="M15 15L2.500 7.500A15 15 0 0 1 29 8z" fill="#e33b2e" />
    <path d="M15 15L29 7.500A15 15 0 0 1 15 30z" fill="#fbc116" />
    <path d="M15 15l0 15A15 15 0 0 1 2.500 7.500z" fill="#279847" />
    <circle cx="15" cy="15" r="7" fill="#fff" />
    <circle cx="15" cy="15" r="5.500" fill="#4285f4" />
    <circle cx="22.500" cy="23" r="9" fill="#1b5360" />
    <path d="M15 25l7-6 8 4-6 6z" fill="#2a8d9b" />
    <path d="M18 20l7-2M18 23l8 1" stroke="#0b2028" strokeWidth="2" />
  </svg>
);

const BoltIcon = () => (
  <svg width="24" height="30" viewBox="0 0 24 30">
    <path d="M9 0h14l-6 9h7L4 29l5-14H1z" fill="#7fc4dc" />
    <path d="M9 0h14l-6 9H5z" fill="#b5e3ee" />
  </svg>
);

const HelpIcon = () => (
  <svg width="30" height="28" viewBox="0 0 30 28">
    <circle cx="13" cy="13.500" r="12" fill="#0f97dc" stroke="#fff" strokeWidth="2.500" />
    <path d="M8.500 10.500q0-5 4.700-5 4.800 0 4.800 4.300 0 2.500-2.800 3.800-2 1-2 3.400" fill="none" stroke="#fff" strokeWidth="2.800" />
    <circle cx="13.200" cy="20.500" r="1.900" fill="#fff" />
    <circle cx="23.500" cy="20" r="6" fill="#f5a81c" />
    <path d="M23.500 18.800v5M23.500 15.500v1.800" stroke="#fff" strokeWidth="1.800" />
  </svg>
);

const SunIcon = () => (
  <svg width="26" height="26" viewBox="0 0 26 26">
    <defs>
      <linearGradient id="sun" x1=".3" y1="0" x2=".6" y2="1">
        <stop offset="0" stopColor="#f6ae31" />
        <stop offset="1" stopColor="#f2690d" />
      </linearGradient>
    </defs>
    <circle cx="13" cy="13" r="12.500" fill="url(#sun)" />
  </svg>
);

const trayStroke = { fill: "none", stroke: "#f0f0f2", strokeWidth: 1.4 };

const ChevronGlyph = () => (
  <svg width="16" height="10" viewBox="0 0 16 10" {...trayStroke}>
    <path d="M.5 9L8 1.500 15.500 9" />
  </svg>
);
const BatteryGlyph = () => (
  <svg width="19" height="12" viewBox="0 0 19 12" {...trayStroke}>
    <path d="M.7.7h16v10.600H.7zM18.300 3.500v5" />
    <path d="M2.500 2.500h8v7h-8z" fill="#fff" stroke="none" />
  </svg>
);
const MeetGlyph = () => (
  <svg width="15" height="19" viewBox="0 0 15 19" {...trayStroke}>
    <rect x=".8" y="4.500" width="9.500" height="10" rx="1.500" />
    <path d="M10.500 8.500L14 6v7l-3.500-2.500M2.500 2q4-2 8 0M2.500 17q4 2 8 0" />
  </svg>
);
const VolumeGlyph = () => (
  <svg width="21" height="18" viewBox="0 0 21 18" {...trayStroke}>
    <path d="M.7 6H4l4-4v14l-4-4H.7zM11 6.500q1.500 2.500 0 5M14 4.500q3 4.500 0 9M17 2.500q4.500 6.500 0 13" />
  </svg>
);
const WifiGlyph = () => (
  <svg width="17" height="17" viewBox="0 0 17 17" {...trayStroke}>
    <path d="M1 16A15 15 0 0 1 16.500 1M4.500 16.500A12 12 0 0 1 16.500 5M8 16.500A8.500 8.500 0 0 1 16.500 9M11.500 16.500A5 5 0 0 1 16.500 12.500" />
    <circle cx="15.300" cy="15.500" r="1.300" fill="#fff" stroke="none" />
  </svg>
);
const NoticeGlyph = () => (
  <svg width="20" height="20" viewBox="0 0 20 20">
    <path d="M0 0h20v15h-8l-4 5v-5H0z" fill="#fff" />
    <path d="M3.500 4h13M3.500 7.500h13M3.500 11h9" stroke="#1b1b28" strokeWidth="1.200" />
  </svg>
);

const MinimizeGlyph = () => (
  <svg width="14" height="14" viewBox="0 0 14 14" stroke="#fff">
    <path d="M.5 6.500h13" />
  </svg>
);
const RestoreGlyph = () => (
  <svg width="14" height="14" viewBox="0 0 14 14" stroke="#fff" fill="none">
    <path d="M.5 3.500h10v10H.5zM2.500 3.500v-3h11v11h-3" />
  </svg>
);
const CloseGlyph = () => (
  <svg width="14" height="14" viewBox="0 0 14 14" stroke="#fff">
    <path d="M.5.5l13 13M13.500.5l-13 13" />
  </svg>
);

/* ---------- screen ---------- */

const tabs = [
  { title: "Speedtest by Ookla - The Globa", icon: <SpeedtestIcon />, line: true, spread: 0.22 },
  { title: "GitHub - deepanshululla/flight-r", icon: <FaGithub size={20} color="#fff" />, line: true, spread: 0.03 },
  { title: "Tech Mahindra is hiring for Asso", icon: <MediumMark>M</MediumMark>, line: true, spread: 0.02 },
  { title: "Careers at Tech Mahindra", icon: <DocIcon />, spread: 0 },
  { title: "PRK Dental Care Services", icon: <MdPublic size={20} color="#9aa0a6" />, active: true, spread: 0.1 },
];

const footerLinks = ["Home", "About Us", "Our Services", "Contact Us"];

const apps = [
  { icon: <ExplorerIcon />, running: true },
  { icon: <StoreIcon /> },
  { icon: <MailIcon /> },
  {
    icon: (
      <DropboxTile>
        <FaDropbox size={19} />
      </DropboxTile>
    ),
  },
  { icon: <FirefoxIcon /> },
  { icon: <CodeIcon /> },
  { icon: <FaWhatsapp size={32} color="#25d366" />, running: true, badge: "19" },
  { icon: <BraveIcon />, running: true },
  { icon: <EdgeIcon /> },
  { icon: <NotepadIcon />, running: true },
  { icon: <GearIcon />, running: true },
  { icon: <WindowIcon />, running: true },
  { icon: <ChromeIcon />, active: true },
  { icon: <BoltIcon />, running: true },
];

const google: [string, string][] = [
  ["G", "#4285f4"],
  ["o", "#ea4335"],
  ["o", "#fbbc05"],
  ["g", "#4285f4"],
  ["l", "#34a853"],
  ["e", "#ea4335"],
];

const LinkColumn = ({ title }: { title: string }) => (
  <div>
    <FooterTitle>{title}</FooterTitle>
    {footerLinks.map((label) => (
      <FooterRow key={label}>
        <BsArrowRight size={15} />
        {label}
      </FooterRow>
    ))}
  </div>
);

export default function App() {
  return (
    <Screen>
      <GlobalStyle />
      <TabStrip>
        <TabSearch>
          <MdKeyboardArrowDown size={20} />
        </TabSearch>
        {tabs.map((t) => (
          <Tab key={t.title} $active={t.active} $line={t.line}>
            {t.icon}
            <TabTitle $spread={t.spread}>{t.title}</TabTitle>
            <TabClose>
              <MdClose size={16} />
            </TabClose>
          </Tab>
        ))}
        <NewTab>
          <MdAdd size={20} />
        </NewTab>
        <WindowButtons>
          <WindowButton>
            <MinimizeGlyph />
          </WindowButton>
          <WindowButton>
            <RestoreGlyph />
          </WindowButton>
          <WindowButton>
            <CloseGlyph />
          </WindowButton>
        </WindowButtons>
      </TabStrip>

      <Toolbar>
        <NavIcon $gap={23}>
          <MdArrowBack size={21} />
        </NavIcon>
        <NavIcon $dim $gap={23}>
          <MdArrowForward size={21} />
        </NavIcon>
        <NavIcon $gap={21}>
          <MdRefresh size={22} />
        </NavIcon>
        <Omnibox>
          <InfoBadge>
            <MdOutlineInfo size={21} />
          </InfoBadge>
          <Url>
            <b>localhost</b>:8080/contactpage
          </Url>
          <OmniIcon>
            <MdZoomOut size={22} />
          </OmniIcon>
          <OmniIcon>
            <MdStarBorder size={23} />
          </OmniIcon>
        </Omnibox>
        <ToolActions>
          <PuzzleIcon />
          <Divider $h={20} $m="0 22px 0 21px" />
          <SidePanelIcon />
          <Divider $h={0} $m="0 10px" />
          <AvatarIcon />
          <Divider $h={0} $m="0 10px" />
          <MdMoreVert size={24} />
        </ToolActions>
      </Toolbar>

      <Bookmarks>
        <Bookmark $w={189} $spread={0.24}>
          <TomcatIcon />
          Apache Tomcat® -...
        </Bookmark>
        <Bookmark $w={115}>
          <ChatIcon />
          New chat
        </Bookmark>
        <Bookmark $spread={0.05}>
          <MinimalIcon />
          Minimalist Modern...
        </Bookmark>
        <Spacer />
        <Divider $h={19} $m="0 19px 0 0" />
        <Bookmark $spread={0.05}>
          <MdOutlineFolder size={23} />
          All Bookmarks
        </Bookmark>
      </Bookmarks>

      <Viewport>
        <Page>
          <Navbar>
            <Brand>
              <FaTooth size={38} />
              PRK DentCare
            </Brand>
            <NavLinks>
              <NavLink>Home</NavLink>
              <NavLink $spread={-0.29}>About</NavLink>
              <NavLink $spread={0.09}>Service</NavLink>
              <NavLink>
                Pages
                <Caret />
              </NavLink>
              <NavLink $active $spread={-0.15}>
                Contact
              </NavLink>
            </NavLinks>
            <SignOut>SignOut</SignOut>
          </Navbar>

          <ContactGrid>
            <ContactCard>
              <Eyebrow>
                CONTACT US
                <Rule $w={42} $c={primary} $gap={10} />
                <Rule $w={15} $c="#f57e57" $gap={4} />
              </Eyebrow>
              <CardTitle>
                Feel Free To
                <br />
                <TightLine>Contact Us</TightLine>
              </CardTitle>
              <ContactItem>
                <BsGeoAlt size={38} />
                <div>
                  <ItemTitle>Our Office</ItemTitle>
                  <ItemText>123 Street, Karve Nager, Pune</ItemText>
                </div>
              </ContactItem>
              <ContactItem>
                <BsEnvelopeOpen size={38} />
                <div>
                  <ItemTitle>Email Us</ItemTitle>
                  <ItemText>prathameshk228@gmail.com</ItemText>
                </div>
              </ContactItem>
              <ContactItem>
                <BsPhoneVibrate size={38} />
                <div>
                  <ItemTitle>Call Us</ItemTitle>
                  <ItemText>+91-83-80-9745-76</ItemText>
                </div>
              </ContactItem>
            </ContactCard>

            <Form>
              <Input placeholder="Your Name" />
              <Input placeholder="Your Mobile" />
              <Input placeholder="Your Email" />
              <Input placeholder="Subject" />
              <MessageField>
                <TextArea placeholder="Message" />
                <Grabber width="11" height="11" viewBox="0 0 11 11">
                  <path d="M1 10L10 1M6 10L10 6" stroke="#4a5156" strokeWidth="1.300" />
                </Grabber>
              </MessageField>
              <Submit type="button">Send Message</Submit>
            </Form>

            <MapFrame>
              <MapDrawing />
              <ScrollHint>Use ctrl + scroll to zoom the map</ScrollHint>
              <MapInfo>
                <MapPlace>New York</MapPlace>
                <MapRegion>United States</MapRegion>
                <MapLink>View larger map</MapLink>
              </MapInfo>
              <Satellite>
                <SatelliteView />
              </Satellite>
              <GoogleMark>
                {google.map(([ch, c], i) => (
                  <Letter key={i} $c={c}>
                    {ch}
                  </Letter>
                ))}
              </GoogleMark>
              <ZoomControl>
                <ZoomGlyphs />
              </ZoomControl>
              <Attribution>
                <span>Keyboard shortcuts</span>
                <MapData>Map data ©2024 Google, INEGI</MapData>
                <Terms>Terms</Terms>
              </Attribution>
            </MapFrame>
          </ContactGrid>

          <Footer>
            <LinkColumn title="Quick Links" />
            <LinkColumn title="Popular Links" />
            <div>
              <FooterTitle $spread={-0.15}>Get In Touch</FooterTitle>
              <FooterRow>
                <BsGeoAlt size={15} />
                Karve Nager, Pune
              </FooterRow>
              <FooterRow>
                <BsEnvelopeOpen size={15} />
                prathameshk228@gmail.com
              </FooterRow>
              <FooterRow>
                <BsTelephone size={15} />
                +91-83-80-9745-76
              </FooterRow>
            </div>
            <div>
              <FooterTitle $spread={-0.5}>Follow Us</FooterTitle>
              <Socials>
                <Square>
                  <FaTwitter size={20} />
                </Square>
                <Square>
                  <FaFacebookF size={20} />
                </Square>
                <Square>
                  <FaLinkedinIn size={20} />
                </Square>
                <Square>
                  <FaInstagram size={20} />
                </Square>
              </Socials>
            </div>
          </Footer>
          <BackToTop>
            <BsArrowUp size={19} />
          </BackToTop>
        </Page>
        <Scrollbar>
          <ScrollArrow />
          <Thumb />
          <ScrollArrow $down />
        </Scrollbar>
      </Viewport>

      <Taskbar>
        <StartCell>
          <WindowsLogo />
        </StartCell>
        <SearchBox>
          <SearchGlyph />
          <SearchText>Type here to search</SearchText>
          <Landscape />
        </SearchBox>
        <TaskView>
          <TaskViewGlyph />
          <Grip />
        </TaskView>
        {apps.map((a, i) => (
          <AppCell key={i} $running={a.running} $active={a.active}>
            {a.icon}
            {a.badge && (
              <CountBadge $x={36} $y={24} $s={22}>
                {a.badge}
              </CountBadge>
            )}
          </AppCell>
        ))}
        <Tray>
          <TrayItem $gap={33}>
            <HelpIcon />
          </TrayItem>
          <TrayItem $gap={33}>
            <SunIcon />
          </TrayItem>
          <Temperature $gap={12}>27°C</Temperature>
          <TrayItem $gap={29}>
            <ChevronGlyph />
          </TrayItem>
          <TrayItem $gap={13}>
            <BatteryGlyph />
          </TrayItem>
          <TrayItem $gap={14}>
            <MeetGlyph />
          </TrayItem>
          <TrayItem $gap={11}>
            <VolumeGlyph />
          </TrayItem>
          <TrayItem $gap={12}>
            <WifiGlyph />
          </TrayItem>
          <Language $gap={14}>ENG</Language>
          <Clock $gap={15}>
            14:42
            <br />
            02-02-2024
          </Clock>
          <TrayItem $gap={22}>
            <NoticeGlyph />
            <CountBadge $x={9} $y={9} $s={20}>
              1
            </CountBadge>
          </TrayItem>
          <DesktopEdge />
        </Tray>
      </Taskbar>
    </Screen>
  );
}
